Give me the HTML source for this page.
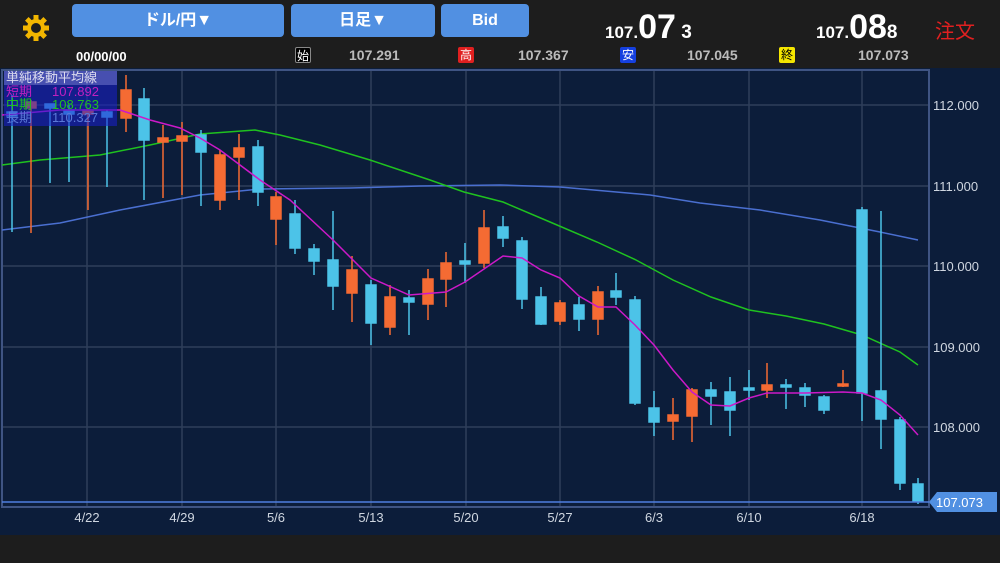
<!DOCTYPE html>
<html><head><meta charset="utf-8"><style>
body{margin:0;width:1000px;height:563px;background:#1d1d1d;overflow:hidden;font-family:"Liberation Sans","Noto Sans CJK JP",sans-serif;position:relative}
.btn{position:absolute;top:4px;height:33px;background:#5190e2;border-radius:4px;color:#fff;font-weight:bold;font-size:16px;text-align:center;line-height:33px}
.t{position:absolute;color:#fff}
.lab{position:absolute;top:47px;width:16px;height:16px;font-size:12px;line-height:16px;text-align:center;border-radius:2px}
.v{position:absolute;top:47px;font-size:14px;color:#bbb;font-weight:bold}
</style></head><body>
<svg style="position:absolute;left:22px;top:14px" width="28" height="28" viewBox="-14 -14 28 28">
<g fill="#f2b600"><circle r="9"/>
<g id="tt"><rect x="-2.5" y="-13" width="5" height="6"/></g>
<use href="#tt" transform="rotate(45)"/><use href="#tt" transform="rotate(90)"/><use href="#tt" transform="rotate(135)"/><use href="#tt" transform="rotate(180)"/><use href="#tt" transform="rotate(225)"/><use href="#tt" transform="rotate(270)"/><use href="#tt" transform="rotate(315)"/></g>
<circle r="5" fill="#1d1d1d"/></svg>
<div class="btn" style="left:72px;width:212px">ドル/円▼</div>
<div class="btn" style="left:291px;width:144px">日足▼</div>
<div class="btn" style="left:441px;width:88px">Bid</div>
<div class="t" style="left:605px;top:8px;font-weight:bold"><span style="font-size:17px">107.</span><span style="font-size:34px">07</span><span style="font-size:19px"> 3</span></div>
<div class="t" style="left:816px;top:8px;font-weight:bold"><span style="font-size:17px">107.</span><span style="font-size:34px">08</span><span style="font-size:19px">8</span></div>
<div class="t" style="left:935px;top:15px;font-size:20px;color:#e02020">注文</div>
<div class="t" style="left:76px;top:49px;font-size:13px;font-weight:bold">00/00/00</div>
<div class="lab" style="left:295px;background:#000;color:#fff;border:1px solid #888;width:14px;height:14px">始</div><div class="v" style="left:349px">107.291</div>
<div class="lab" style="left:458px;background:#e02020;color:#fff">高</div><div class="v" style="left:518px">107.367</div>
<div class="lab" style="left:620px;background:#1540e0;color:#fff">安</div><div class="v" style="left:687px">107.045</div>
<div class="lab" style="left:779px;background:#f5e600;color:#000">終</div><div class="v" style="left:858px">107.073</div>
<svg style="position:absolute;left:0;top:68px" width="1000" height="467" viewBox="0 68 1000 467">
<rect x="0" y="68" width="1000" height="467" fill="#0c1d3a"/>
<g stroke="#2e3f5a" stroke-width="1.5">
<line x1="2" x2="929" y1="105" y2="105"/><line x1="2" x2="929" y1="186" y2="186"/><line x1="2" x2="929" y1="266" y2="266"/><line x1="2" x2="929" y1="347" y2="347"/><line x1="2" x2="929" y1="427" y2="427"/>
<line x1="87" x2="87" y1="70" y2="507"/><line x1="182" x2="182" y1="70" y2="507"/><line x1="276" x2="276" y1="70" y2="507"/><line x1="371" x2="371" y1="70" y2="507"/><line x1="466" x2="466" y1="70" y2="507"/><line x1="560" x2="560" y1="70" y2="507"/><line x1="654" x2="654" y1="70" y2="507"/><line x1="749" x2="749" y1="70" y2="507"/><line x1="862" x2="862" y1="70" y2="507"/>
</g>
<rect x="2" y="70" width="927" height="437" fill="none" stroke="#3f5483" stroke-width="2"/>
<g fill="#cfd6e0" font-size="13">
<text x="933" y="110">112.000</text><text x="933" y="191">111.000</text><text x="933" y="271">110.000</text><text x="933" y="352">109.000</text><text x="933" y="432">108.000</text>
<text x="87" y="522" text-anchor="middle">4/22</text><text x="182" y="522" text-anchor="middle">4/29</text><text x="276" y="522" text-anchor="middle">5/6</text><text x="371" y="522" text-anchor="middle">5/13</text><text x="466" y="522" text-anchor="middle">5/20</text><text x="560" y="522" text-anchor="middle">5/27</text><text x="654" y="522" text-anchor="middle">6/3</text><text x="749" y="522" text-anchor="middle">6/10</text><text x="862" y="522" text-anchor="middle">6/18</text>
</g>
<polyline fill="none" stroke="#4a6fd0" stroke-width="1.5" points="2,230 60,223 120,210 200,195 260,189 350,188 420,186 500,185 560,187 650,195 700,203 760,210 820,220 880,232 918,240"/>
<polyline fill="none" stroke="#1fc21f" stroke-width="1.5" points="2,165 40,160 100,155 150,145 200,134 255,130 280,135 320,145 370,160 430,180 464,192 503,202 550,222 597,242 636,260 673,280 711,297 749,310 786,316 824,324 862,335 900,352 918,365"/>
<g stroke-width="1.5">
<g stroke="#4cc3e8" fill="#4cc3e8">
<line x1="12" x2="12" y1="95" y2="232"/><rect x="7" y="112" width="10" height="4"/>
<line x1="50" x2="50" y1="105" y2="183"/><rect x="45" y="104" width="10" height="4"/>
<line x1="69" x2="69" y1="105" y2="182"/><rect x="64" y="110" width="10" height="4"/>
<line x1="107" x2="107" y1="110" y2="187"/><rect x="102" y="112" width="10" height="5"/>
<line x1="144" x2="144" y1="88" y2="200"/><rect x="139" y="99" width="10" height="41"/>
<line x1="201" x2="201" y1="130" y2="206"/><rect x="196" y="135" width="10" height="17"/>
<line x1="258" x2="258" y1="140" y2="206"/><rect x="253" y="147" width="10" height="45"/>
<line x1="295" x2="295" y1="200" y2="254"/><rect x="290" y="214" width="10" height="34"/>
<line x1="314" x2="314" y1="244" y2="275"/><rect x="309" y="249" width="10" height="12"/>
<line x1="333" x2="333" y1="211" y2="310"/><rect x="328" y="260" width="10" height="26"/>
<line x1="371" x2="371" y1="280" y2="345"/><rect x="366" y="285" width="10" height="38"/>
<line x1="409" x2="409" y1="290" y2="335"/><rect x="404" y="298" width="10" height="4"/>
<line x1="465" x2="465" y1="243" y2="283"/><rect x="460" y="261" width="10" height="3"/>
<line x1="503" x2="503" y1="216" y2="247"/><rect x="498" y="227" width="10" height="11"/>
<line x1="522" x2="522" y1="237" y2="309"/><rect x="517" y="241" width="10" height="58"/>
<line x1="541" x2="541" y1="287" y2="325"/><rect x="536" y="297" width="10" height="27"/>
<line x1="579" x2="579" y1="297" y2="331"/><rect x="574" y="305" width="10" height="14"/>
<line x1="616" x2="616" y1="273" y2="305"/><rect x="611" y="291" width="10" height="6"/>
<line x1="635" x2="635" y1="296" y2="405"/><rect x="630" y="300" width="10" height="103"/>
<line x1="654" x2="654" y1="391" y2="436"/><rect x="649" y="408" width="10" height="14"/>
<line x1="711" x2="711" y1="382" y2="425"/><rect x="706" y="390" width="10" height="6"/>
<line x1="730" x2="730" y1="377" y2="436"/><rect x="725" y="392" width="10" height="18"/>
<line x1="749" x2="749" y1="370" y2="400"/><rect x="744" y="388" width="10" height="2"/>
<line x1="786" x2="786" y1="379" y2="409"/><rect x="781" y="385" width="10" height="2"/>
<line x1="805" x2="805" y1="383" y2="407"/><rect x="800" y="388" width="10" height="7"/>
<line x1="824" x2="824" y1="395" y2="414"/><rect x="819" y="397" width="10" height="13"/>
<line x1="862" x2="862" y1="207" y2="421"/><rect x="857" y="210" width="10" height="183"/>
<line x1="881" x2="881" y1="211" y2="449"/><rect x="876" y="391" width="10" height="28"/>
<line x1="900" x2="900" y1="417" y2="490"/><rect x="895" y="420" width="10" height="63"/>
<line x1="918" x2="918" y1="478" y2="504"/><rect x="913" y="484" width="10" height="17"/>
</g>
<g stroke="#f56b33" fill="#f56b33">
<line x1="31" x2="31" y1="100" y2="233"/><rect x="26" y="102" width="10" height="6"/>
<line x1="88" x2="88" y1="110" y2="210"/><rect x="83" y="110" width="10" height="4"/>
<line x1="126" x2="126" y1="75" y2="132"/><rect x="121" y="90" width="10" height="28"/>
<line x1="163" x2="163" y1="125" y2="198"/><rect x="158" y="138" width="10" height="4"/>
<line x1="182" x2="182" y1="122" y2="195"/><rect x="177" y="136" width="10" height="5"/>
<line x1="220" x2="220" y1="150" y2="210"/><rect x="215" y="155" width="10" height="45"/>
<line x1="239" x2="239" y1="134" y2="200"/><rect x="234" y="148" width="10" height="9"/>
<line x1="276" x2="276" y1="192" y2="245"/><rect x="271" y="197" width="10" height="22"/>
<line x1="352" x2="352" y1="256" y2="322"/><rect x="347" y="270" width="10" height="23"/>
<line x1="390" x2="390" y1="285" y2="335"/><rect x="385" y="297" width="10" height="30"/>
<line x1="428" x2="428" y1="269" y2="320"/><rect x="423" y="279" width="10" height="25"/>
<line x1="446" x2="446" y1="252" y2="307"/><rect x="441" y="263" width="10" height="16"/>
<line x1="484" x2="484" y1="210" y2="268"/><rect x="479" y="228" width="10" height="35"/>
<line x1="560" x2="560" y1="300" y2="325"/><rect x="555" y="303" width="10" height="18"/>
<line x1="598" x2="598" y1="286" y2="335"/><rect x="593" y="292" width="10" height="27"/>
<line x1="673" x2="673" y1="398" y2="440"/><rect x="668" y="415" width="10" height="6"/>
<line x1="692" x2="692" y1="388" y2="442"/><rect x="687" y="390" width="10" height="26"/>
<line x1="767" x2="767" y1="363" y2="398"/><rect x="762" y="385" width="10" height="5"/>
<line x1="843" x2="843" y1="370" y2="387"/><rect x="838" y="384" width="10" height="2"/>
</g></g>
<polyline fill="none" stroke="#cc19c8" stroke-width="1.5" points="2,115 60,110 120,110 150,120 180,128 200,138 220,150 260,180 290,200 333,240 371,278 409,295 446,292 465,282 503,256 522,258 541,270 560,278 579,296 598,307 616,307 635,325 654,345 673,370 692,392 711,405 730,406 749,398 767,393 805,393 843,392 862,393 881,400 900,415 918,435"/>
<line x1="2" x2="929" y1="502" y2="502" stroke="#4f7fe0" stroke-width="1.5"/>
<polygon points="929,502 937,492 997,492 997,512 937,512" fill="#5190e2"/>
<text x="936" y="507" fill="#fff" font-size="13">107.073</text>
<rect x="4" y="71" width="113" height="55" fill="#1a1fd0" fill-opacity="0.55"/>
<rect x="4" y="71" width="113" height="14" fill="#6a70c8" fill-opacity="0.6"/>
<g font-size="13"><text x="6" y="82" fill="#dde">単純移動平均線</text>
<text x="6" y="96" fill="#c020c0">短期</text><text x="52" y="96" fill="#c020c0">107.892</text>
<text x="6" y="109" fill="#20c020">中期</text><text x="52" y="109" fill="#20c020">108.763</text>
<text x="6" y="122" fill="#5a78d8">長期</text><text x="52" y="122" fill="#5a78d8">110.327</text></g>
</svg>
</body></html>
